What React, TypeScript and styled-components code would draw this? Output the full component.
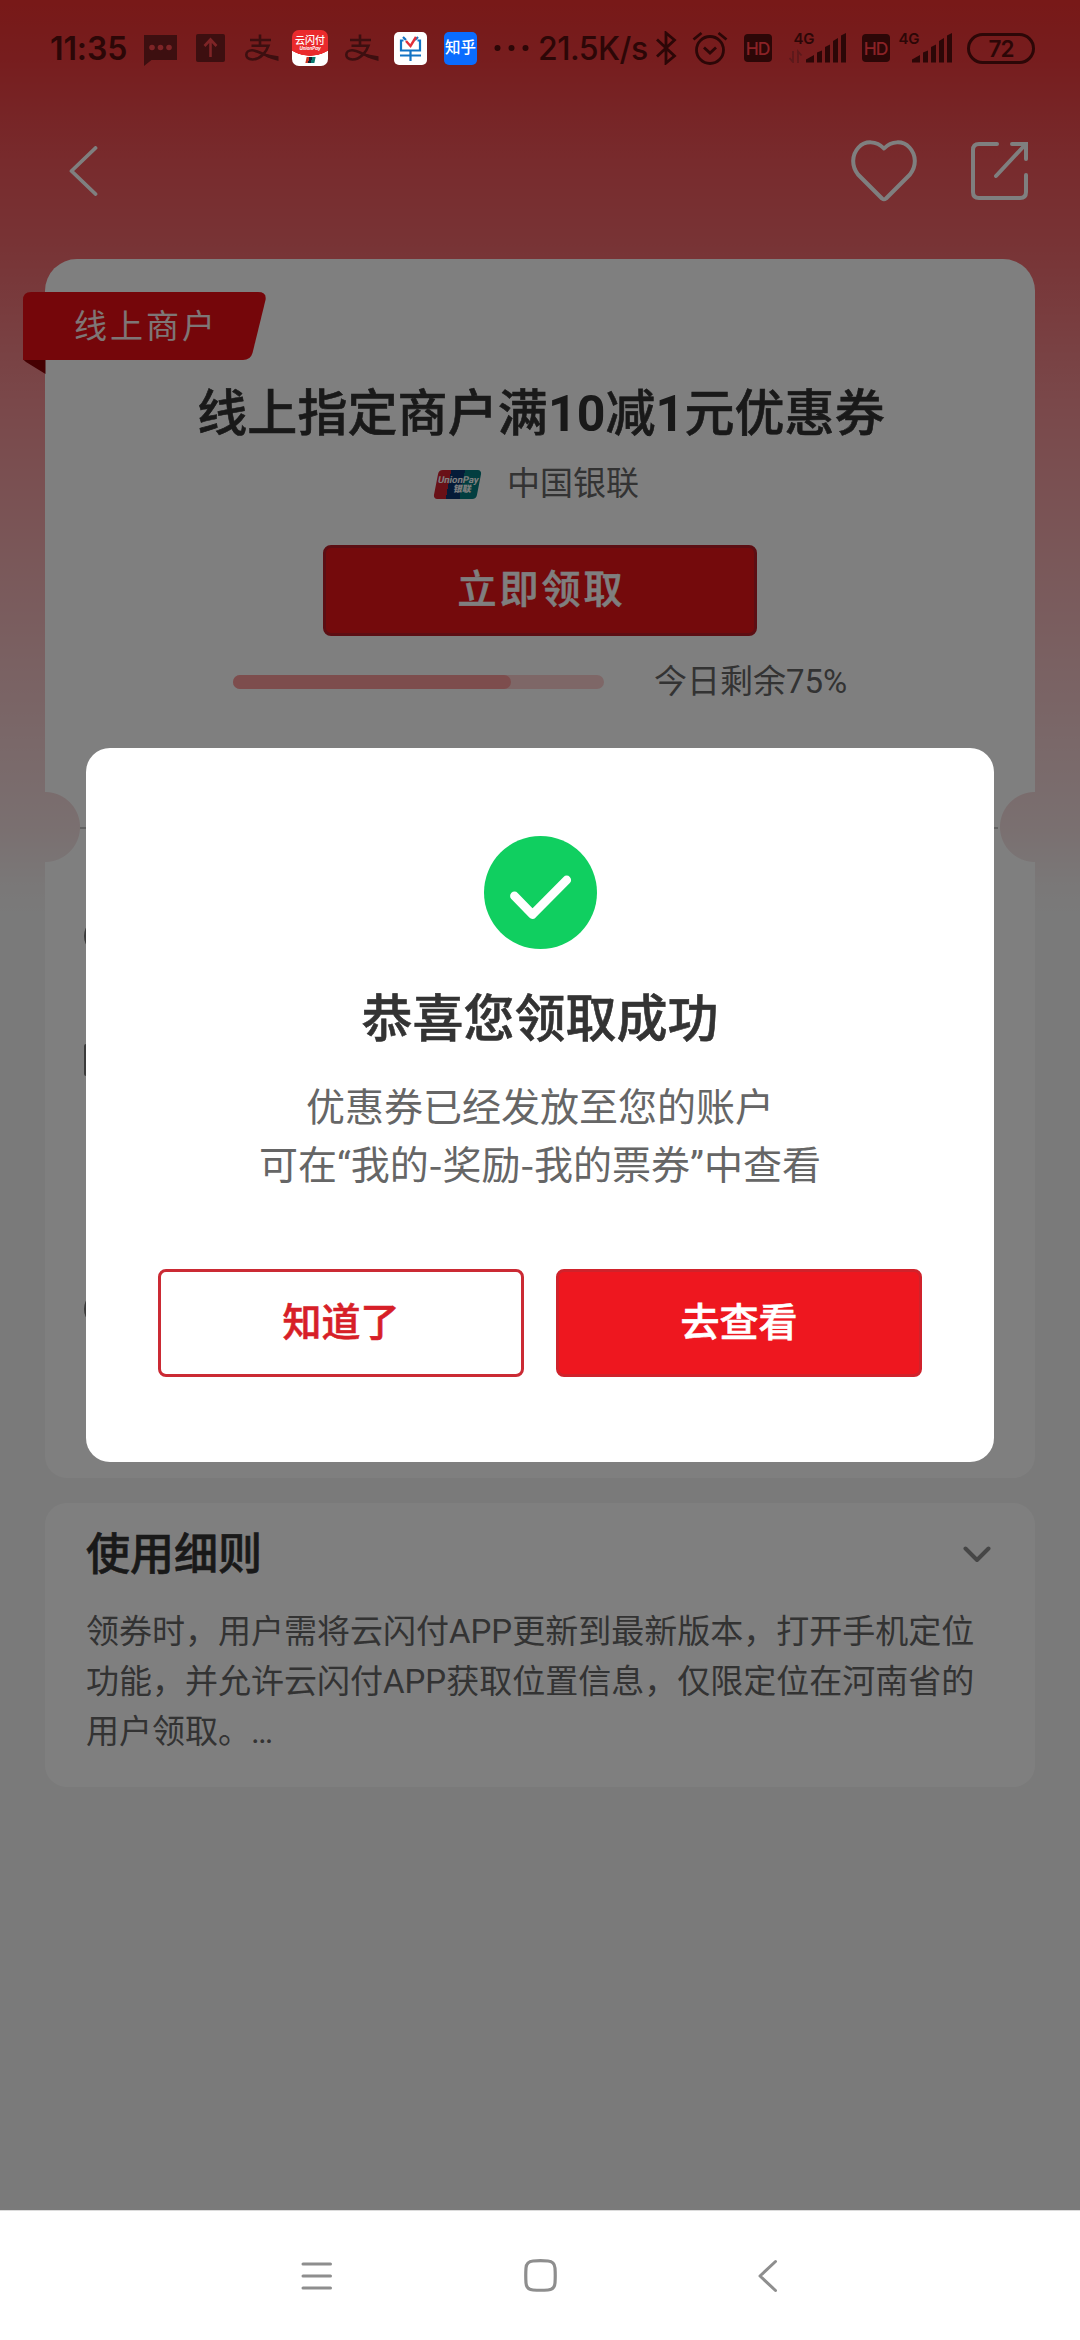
import React from "react";
import styled, { createGlobalStyle, css } from "styled-components";

const GlobalStyle = createGlobalStyle`
  *, *::before, *::after { box-sizing: border-box; }
  html, body { margin: 0; padding: 0; }
  body {
    width: 1080px;
    font-family: Roboto, "Noto Sans CJK SC", sans-serif;
    background: #fff;
    overflow: hidden;
  }
  h1, h2, p { margin: 0; }
  button { font-family: inherit; margin: 0; padding: 0; cursor: pointer; }
  svg { display: block; flex: none; }
`;

/* a weight between medium and bold */
const semiBold = css`
  font-weight: 500;
  -webkit-text-stroke: 0.6px currentColor;
`;

const Screen = styled.div`
  position: relative;
  display: flex;
  flex-direction: column;
  width: 1080px;
  height: 2340px;
  overflow: hidden;
`;

const Page = styled.main`
  height: 2210px;
  display: flex;
  flex-direction: column;
  padding: 80px 45px 0;
  background: linear-gradient(
      180deg,
      #f03230 0,
      #ee3b3d 60px,
      #f0565a 160px,
      #f0666a 240px,
      #f49094 400px,
      #f5b0b3 560px,
      #f5d0d2 740px,
      #f5e0e1 830px,
      #f5f0f0 885px,
      #f5f5f5 920px
    )
    no-repeat #f5f5f5;
`;

/* ---------- status bar ---------- */

const StatusBar = styled.header`
  position: absolute;
  inset: 0 0 auto 0;
  z-index: 3;
  height: 96px;
  display: flex;
  align-items: center;
  padding: 0 45px 0 50px;
  color: #2c0707;
  font-family: Inter, "Noto Sans CJK SC", sans-serif;
`;

const Slot = styled.div<{ $gap?: number; $w: number }>`
  flex: none;
  display: flex;
  align-items: center;
  width: ${(p) => p.$w}px;
  margin-left: ${(p) => p.$gap ?? 0}px;
  white-space: nowrap;
`;

const StatusText = styled.span`
  font-size: 32px;
  line-height: 38px;
  font-weight: 600;
  letter-spacing: -0.1px;
  padding-top: 2px;
`;

const SpeedText = styled(StatusText)`
  font-weight: 500;
  letter-spacing: -0.5px;
`;

const HdBadge = styled.span`
  width: 28px;
  height: 28px;
  border-radius: 4px;
  background: #2c0707;
  color: #8a2226;
  font-size: 17.5px;
  font-weight: 500;
  line-height: 29px;
  text-align: center;
  letter-spacing: -1px;
`;

const NetLabel = styled.span`
  font-size: 15px;
  line-height: 14px;
  font-weight: 600;
  letter-spacing: -0.3px;
`;

const Signal = styled.div<{ $indent: number }>`
  display: flex;
  flex-direction: column;
  height: 32px;
  padding-left: ${(p) => p.$indent}px;
  width: 100%;
`;

const SignalBars = styled.svg`
  margin-top: -13px;
  align-self: flex-end;
`;

const BatteryPill = styled.span`
  width: 68px;
  height: 31px;
  border: 3px solid #2c0707;
  border-radius: 16px;
  font-size: 22.5px;
  line-height: 26px;
  font-weight: 600;
  letter-spacing: -1px;
  text-align: center;
`;

const UnionApp = styled.span`
  width: 36px;
  height: 36px;
  border-radius: 7px;
  overflow: hidden;
  display: flex;
  flex-direction: column;
  align-items: center;
  background: radial-gradient(ellipse 30px 25px at 50% 1px, #ea2a2c 98%, #fff 100%);
  color: #fff;
`;

const UnionAppName = styled.span`
  font-size: 10px;
  line-height: 11px;
  font-weight: 500;
  padding-top: 5px;
`;

const UnionAppSub = styled.span`
  font-size: 4.5px;
  line-height: 5px;
  font-weight: 700;
  font-style: italic;
`;

const UnionAppMark = styled.span`
  width: 9px;
  height: 6px;
  margin-top: 6px;
  transform: skewX(-12deg);
  background: linear-gradient(90deg, #c32 30%, #123 30% 60%, #0b7a70 60%);
`;

const ZhihuApp = styled.span`
  width: 33px;
  height: 33px;
  border-radius: 5px;
  background: #0a6cff;
  color: #fff;
  font-size: 15.5px;
  line-height: 32px;
  font-weight: 500;
  text-align: center;
`;

/* ---------- page header ---------- */

const TitleBar = styled.nav`
  flex: none;
  height: 179px;
  display: flex;
  align-items: center;
  padding: 2px 6px 0 24px;
`;

const IconButton = styled.button`
  display: flex;
  border: 0;
  background: none;
  color: #fff;
`;

const BarActions = styled.div`
  display: flex;
  align-items: center;
  gap: 53px;
  margin-left: auto;
  padding-top: 1px;
`;

/* ---------- coupon card ---------- */

const CouponCard = styled.section`
  position: relative;
  flex: none;
  height: 1219px;
  border-radius: 32px 32px 22px 22px;
  padding-top: 125px;
  display: flex;
  flex-direction: column;
  align-items: center;
  background:
    radial-gradient(circle at 0 568px, transparent 34.5px, #fff 35.5px) 0 0 / 495px 100% no-repeat,
    radial-gradient(circle at 100% 568px, transparent 34.5px, #fff 35.5px) 495px 0 / 495px 100% no-repeat;
`;

const Ribbon = styled.div`
  position: absolute;
  left: -22px;
  top: 33px;
  width: 243px;
  height: 82px;
`;

const RibbonShape = styled.svg`
  position: absolute;
  inset: 0;
`;

const RibbonText = styled.span`
  position: relative;
  display: block;
  padding-left: 51px;
  color: #fff;
  font-size: 33px;
  line-height: 69px;
  letter-spacing: 3px;
  font-weight: 400;
  opacity: 0.92;
`;

const CouponTitle = styled.h1`
  font-size: 50px;
  line-height: 60px;
  ${semiBold}
  letter-spacing: 0.1px;
  padding-left: 2px;
  color: #333;
  white-space: nowrap;
  b { font-weight: 700; -webkit-text-stroke: 0; }
`;

const Issuer = styled.div`
  display: flex;
  align-items: center;
  height: 40px;
  margin-top: 20px;
  padding-right: 5px;
  gap: 28px;
  font-size: 33px;
  line-height: 40px;
  color: #666;
`;

const UnionPayLogo = styled.span`
  display: flex;
  flex-direction: column;
  align-items: center;
  justify-content: center;
  width: 43px;
  height: 29px;
  border-radius: 4px;
  transform: skewX(-11deg);
  background: linear-gradient(90deg, #d3232f 0 29%, #0a3670 29% 61%, #047d80 61%);
  color: #fff;
`;

const LogoLatin = styled.span`
  font-size: 9.5px;
  line-height: 10px;
  font-weight: 700;
`;

const LogoHan = styled.span`
  font-size: 9px;
  line-height: 9px;
  font-weight: 900;
  padding-left: 12px;
`;

const ClaimButton = styled.button`
  width: 434px;
  height: 91px;
  margin-top: 41px;
  border: 3px solid #b81c26;
  border-radius: 8px;
  background: #e81419;
  color: #fff;
  font-size: 39px;
  ${semiBold}
  letter-spacing: 3px;
  text-indent: 3px;
  line-height: 85px;
`;

const StockRow = styled.div`
  display: flex;
  align-items: center;
  align-self: stretch;
  height: 40px;
  margin-top: 26px;
  padding-left: 188px;
  gap: 50px;
  color: #666;
  font-size: 33px;
  line-height: 40px;
`;

const Track = styled.div`
  width: 371px;
  height: 14px;
  border-radius: 7px;
  background: #fccfcf;
`;

const TrackFill = styled.div`
  height: 100%;
  border-radius: 7px;
  background: #fb9a9a;
`;

const Perforation = styled.div`
  align-self: stretch;
  margin: 125px 37px 0 35px;
  height: 2px;
  background: #c4c4c4;
`;

const DetailList = styled.div`
  align-self: stretch;
  display: flex;
  flex-direction: column;
  padding: 88px 39px 0;
  gap: 91px;
`;

const DetailGlyph = styled.i<{ $round?: boolean; $before?: number }>`
  width: ${(p) => (p.$round ? 37 : 34)}px;
  height: ${(p) => (p.$round ? 38 : 32)}px;
  margin-top: ${(p) => p.$before ?? 0}px;
  border: 3px solid #777;
  border-radius: ${(p) => (p.$round ? "50%" : "2px")};
`;

/* ---------- rules card ---------- */

const RulesCard = styled.section`
  flex: none;
  height: 284px;
  margin-top: 25px;
  border-radius: 22px;
  padding: 22px 41px 0;
  background: #fff;
`;

const RulesHead = styled.div`
  display: flex;
  align-items: center;
  justify-content: space-between;
  height: 60px;
  padding-right: 3px;
`;

const RulesTitle = styled.h2`
  font-size: 44px;
  line-height: 60px;
  ${semiBold}
  color: #333;
`;

const RulesText = styled.p`
  margin-top: 22px;
  font-size: 33px;
  line-height: 50px;
  color: #666;
`;

/* ---------- dialog ---------- */

const Backdrop = styled.div`
  position: absolute;
  inset: 0 0 130px 0;
  z-index: 2;
  display: flex;
  align-items: center;
  justify-content: center;
  background: rgba(0, 0, 0, 0.5);
`;

const Dialog = styled.div`
  width: 908px;
  height: 714px;
  border-radius: 24px;
  background: #fff;
  display: flex;
  flex-direction: column;
  align-items: center;
  padding: 88px 72px 0;
`;

const DialogTitle = styled.h2`
  margin-top: 40px;
  font-size: 51px;
  line-height: 62px;
  ${semiBold}
  color: #333;
`;

const DialogText = styled.p`
  margin-top: 28px;
  font-size: 39px;
  line-height: 58px;
  color: #666;
  text-align: center;
  white-space: nowrap;
`;

const Hyphen = styled.span`
  font-family: "Noto Sans CJK SC", sans-serif;
  line-height: 1;
`;

const DialogActions = styled.div`
  display: flex;
  align-self: stretch;
  justify-content: space-between;
  margin-top: 74px;
`;

const DialogButton = styled.button<{ $primary?: boolean }>`
  width: 366px;
  height: 108px;
  border: 3px solid ${(p) => (p.$primary ? "#d0222b" : "#cb2a34")};
  border-radius: 8px;
  background: ${(p) => (p.$primary ? "#ee171f" : "#fff")};
  color: ${(p) => (p.$primary ? "#fff" : "#d71f28")};
  font-size: 39px;
  ${semiBold}
  line-height: 102px;
`;

/* ---------- system navigation ---------- */

const SystemNav = styled.footer`
  height: 130px;
  display: grid;
  grid-template-columns: 223px 234px 20px;
  align-items: center;
  padding-left: 301px;
  border-top: 1px solid #dcdcdc;
  background: #fff;
  color: #8e8e8e;
`;

const AlipayMark = () => (
  <svg width="34" height="28" viewBox="0 0 34 28" fill="none" stroke="#3d0f10" strokeWidth="2.600">
    <path d="M5 6h21M15 0.500v11M6.500 11.700h17C21.500 18 15 25.500 7.500 25.500C3 25.500 1.300 23.300 1.300 20.800C1.300 18.300 3.500 16.300 7 16.300C12 16.300 18 20.500 26 23" />
    <path d="M22 20.300L33.500 22.300V27Q27 25.500 21 22.800Z" fill="#3d0f10" stroke="none" />
  </svg>
);

const bars = [
  "M0 29.500v-3L8 22v7.500z",
  "M11 19.500l5-2v12h-5z",
  "M19 14l5-2.500v18h-5z",
  "M27 8l5-3v24.500h-5z",
  "M35 2.500l5-2.500v29.500h-5z",
];

const SignalIcon = ({ data }: { data?: boolean }) => (
  <SignalBars width={data ? 57 : 40} height="30" viewBox={data ? "-17 0 57 30" : "0 0 40 30"}>
    {bars.map((d) => (
      <path key={d} d={d} fill="#2c0707" />
    ))}
    {data && <path d="M-13 18v11l-3.500-4M-8 30V18.500l3.500 4" stroke="#5c191b" strokeWidth="1.8" fill="none" />}
  </SignalBars>
);

export default function App() {
  return (
    <Screen>
      <GlobalStyle />
      <StatusBar>
        <Slot $w={76}>
          <StatusText>11:35</StatusText>
        </Slot>
        <Slot $w={33} $gap={17.5}>
          <svg width="33" height="35" viewBox="0 -4 33 35">
            <path d="M0 0h33v25H7.500L0 31z" fill="#3d0f10" />
            <g fill="#7e2426">
              <circle cx="8" cy="12.500" r="2.800" />
              <circle cx="16.500" cy="12.500" r="2.800" />
              <circle cx="25" cy="12.500" r="2.800" />
            </g>
          </svg>
        </Slot>
        <Slot $w={29} $gap={19}>
          <svg width="29" height="28" viewBox="0 0 29 28">
            <rect width="29" height="28" rx="2" fill="#3d0f10" />
            <path d="M14.500 23V6M8.500 12l6-6.500 6 6.500" fill="none" stroke="#7e2426" strokeWidth="2.600" />
          </svg>
        </Slot>
        <Slot $w={34} $gap={20}>
          <AlipayMark />
        </Slot>
        <Slot $w={36} $gap={13.5}>
          <UnionApp>
            <UnionAppName>云闪付</UnionAppName>
            <UnionAppSub>UnionPay</UnionAppSub>
            <UnionAppMark />
          </UnionApp>
        </Slot>
        <Slot $w={34} $gap={17}>
          <AlipayMark />
        </Slot>
        <Slot $w={33} $gap={14.5}>
          <svg width="33" height="33" viewBox="0 0 33 33" fill="none">
            <rect width="33" height="33" rx="5" fill="#fff" />
            <path d="M9 5l3 3M9.500 8.500H7v10h19v-10h-2.500M24 5l-3 3M6 23.500h21M16.500 18.500V29" stroke="#1273c4" strokeWidth="2.200" />
            <path d="M12 9l4.500 5L22 5" stroke="#e0303a" strokeWidth="2.400" />
          </svg>
        </Slot>
        <Slot $w={33} $gap={17.5}>
          <ZhihuApp>知乎</ZhihuApp>
        </Slot>
        <Slot $w={35} $gap={16.5}>
          <svg width="35" height="8" viewBox="0 0 35 8" fill="#2c0707">
            <circle cx="3.500" cy="4" r="3" />
            <circle cx="17.500" cy="4" r="3" />
            <circle cx="31.500" cy="4" r="3" />
          </svg>
        </Slot>
        <Slot $w={109} $gap={9.5}>
          <SpeedText>21.5K/s</SpeedText>
        </Slot>
        <Slot $w={21} $gap={9}>
          <svg width="21" height="34" viewBox="0 0 21 34" fill="none" stroke="#2c0707" strokeWidth="2.800">
            <path d="M1 8.500l17.500 16.500L10 32V2l8.500 7L1 25.500" />
          </svg>
        </Slot>
        <Slot $w={36} $gap={15}>
          <svg width="36" height="34" viewBox="0 0 36 34" fill="none" stroke="#2c0707" strokeWidth="2.800">
            <circle cx="18" cy="19" r="13.500" />
            <path d="M12 16.500l6 5.500 6-5.500M1.500 8.500L9.500 2M34.500 8.500L26.500 2" />
          </svg>
        </Slot>
        <Slot $w={28} $gap={15.5}>
          <HdBadge>HD</HdBadge>
        </Slot>
        <Slot $w={57} $gap={17}>
          <Signal $indent={5}>
            <NetLabel>4G</NetLabel>
            <SignalIcon data />
          </Signal>
        </Slot>
        <Slot $w={28} $gap={16}>
          <HdBadge>HD</HdBadge>
        </Slot>
        <Slot $w={53} $gap={9}>
          <Signal $indent={0}>
            <NetLabel>4G</NetLabel>
            <SignalIcon />
          </Signal>
        </Slot>
        <Slot $w={68} $gap={15.5}>
          <BatteryPill>72</BatteryPill>
        </Slot>
      </StatusBar>

      <Page>
        <TitleBar>
          <IconButton aria-label="返回">
            <svg width="30" height="50" viewBox="0 0 30 50" fill="none" stroke="currentColor" strokeWidth="3.800" strokeLinecap="round" strokeLinejoin="round">
              <path d="M26.500 2L2.500 25L26.500 48" />
            </svg>
          </IconButton>
          <BarActions>
            <IconButton aria-label="收藏">
              <svg width="66" height="62" viewBox="0 0 66 62" fill="none" stroke="currentColor" strokeWidth="4" strokeLinejoin="round">
                <path d="M33 8.500C25.500 0.500 14 0.500 7.500 7.500C0.500 15 0.500 26.500 7 34.500L31 58.500Q33 60 35 58.500L59 34.500C65.500 26.500 65.500 15 58.500 7.500C52 0.500 40.500 0.500 33 8.500Z" />
              </svg>
            </IconButton>
            <IconButton aria-label="分享">
              <svg width="59" height="60" viewBox="0 0 59 60" fill="none" stroke="currentColor" strokeWidth="4" strokeLinecap="round">
                <path d="M27 3H9Q3 3 3 9V51Q3 57 9 57H50Q56 57 56 51V34M26 35L54 5" />
                <path d="M42 3H56V18" />
              </svg>
            </IconButton>
          </BarActions>
        </TitleBar>

        <CouponCard>
          <Ribbon>
            <RibbonShape width="243" height="82" viewBox="0 0 243 82">
              <path d="M0 66H22.500V82L3 70Q0 68 0 66Z" fill="#8a0205" />
              <path d="M8 0H235Q244 0 242.500 8L229.500 61Q227.500 68 220 68H0V8Q0 0 8 0Z" fill="#ea0d14" />
            </RibbonShape>
            <RibbonText>线上商户</RibbonText>
          </Ribbon>
          <CouponTitle>
            线上指定商户满<b>10</b>减<b>1</b>元优惠券
          </CouponTitle>
          <Issuer>
            <UnionPayLogo>
              <LogoLatin>UnionPay</LogoLatin>
              <LogoHan>银联</LogoHan>
            </UnionPayLogo>
            中国银联
          </Issuer>
          <ClaimButton>立即领取</ClaimButton>
          <StockRow>
            <Track>
              <TrackFill style={{ width: "75%" }} />
            </Track>
            今日剩余75%
          </StockRow>
          <Perforation />
          <DetailList>
            <DetailGlyph $round />
            <DetailGlyph $before={-2} />
            <DetailGlyph $round $before={123} />
          </DetailList>
        </CouponCard>

        <RulesCard>
          <RulesHead>
            <RulesTitle>使用细则</RulesTitle>
            <svg width="28" height="19" viewBox="0 0 28 19" fill="none" stroke="#8c8c8c" strokeWidth="4" strokeLinecap="round" strokeLinejoin="round">
              <path d="M2.500 2.500L14 14L25.500 2.500" />
            </svg>
          </RulesHead>
          <RulesText>
            领券时，用户需将云闪付APP更新到最新版本，打开手机定位功能，并允许云闪付APP获取位置信息，仅限定位在河南省的用户领取。…
          </RulesText>
        </RulesCard>
      </Page>

      <Backdrop>
        <Dialog>
          <svg width="113" height="113" viewBox="0 0 113 113" fill="none">
            <circle cx="56.500" cy="56.500" r="56.500" fill="#10cf60" />
            <path d="M30.500 60L48.500 78.500L82.700 44" stroke="#fff" strokeWidth="8.800" strokeLinecap="round" strokeLinejoin="round" />
          </svg>
          <DialogTitle>恭喜您领取成功</DialogTitle>
          <DialogText>
            优惠券已经发放至您的账户
            <br />
            可在“我的<Hyphen>-</Hyphen>奖励<Hyphen>-</Hyphen>我的票券”中查看
          </DialogText>
          <DialogActions>
            <DialogButton>知道了</DialogButton>
            <DialogButton $primary>去查看</DialogButton>
          </DialogActions>
        </Dialog>
      </Backdrop>

      <SystemNav>
        <svg width="31" height="28" viewBox="0 0 31 28" stroke="currentColor" strokeWidth="3" strokeLinecap="round">
          <path d="M2 2H29.500M2 14H29.500M2 26H29.500" />
        </svg>
        <svg width="33" height="33" viewBox="0 0 33 33" fill="none" stroke="currentColor" strokeWidth="3.200">
          <path d="M9 2Q16.500 1.400 24 2Q30.500 2.500 31 9Q31.500 16.500 31 24Q30.500 30.500 24 31Q16.500 31.500 9 31Q2.500 30.500 2 24Q1.500 16.500 2 9Q2.500 2.500 9 2Z" />
        </svg>
        <svg width="20" height="34" viewBox="0 0 20 34" fill="none" stroke="currentColor" strokeWidth="3" strokeLinecap="round" strokeLinejoin="round">
          <path d="M17.500 2.500L2 17L17.500 31.500" />
        </svg>
      </SystemNav>
    </Screen>
  );
}
